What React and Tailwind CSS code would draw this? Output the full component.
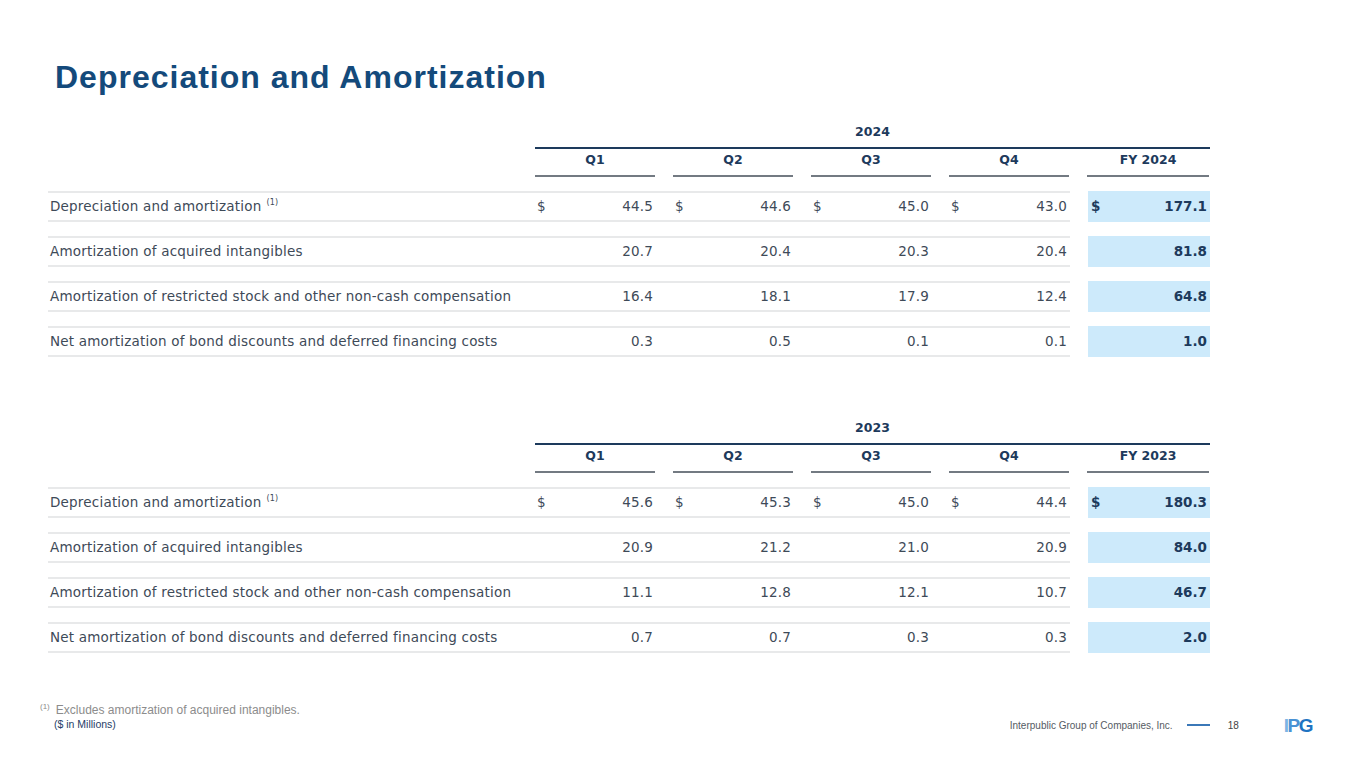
import React from 'react';

// Datos de las tablas
const tablas = [
  {
    anio: '2024',
    filas: [
      { label: 'Depreciation and amortization', nota: true, dolar: true, q: ['44.5', '44.6', '45.0', '43.0'], fy: '177.1' },
      { label: 'Amortization of acquired intangibles', q: ['20.7', '20.4', '20.3', '20.4'], fy: '81.8' },
      { label: 'Amortization of restricted stock and other non-cash compensation', q: ['16.4', '18.1', '17.9', '12.4'], fy: '64.8' },
      { label: 'Net amortization of bond discounts and deferred financing costs', q: ['0.3', '0.5', '0.1', '0.1'], fy: '1.0' },
    ],
  },
  {
    anio: '2023',
    filas: [
      { label: 'Depreciation and amortization', nota: true, dolar: true, q: ['45.6', '45.3', '45.0', '44.4'], fy: '180.3' },
      { label: 'Amortization of acquired intangibles', q: ['20.9', '21.2', '21.0', '20.9'], fy: '84.0' },
      { label: 'Amortization of restricted stock and other non-cash compensation', q: ['11.1', '12.8', '12.1', '10.7'], fy: '46.7' },
      { label: 'Net amortization of bond discounts and deferred financing costs', q: ['0.7', '0.7', '0.3', '0.3'], fy: '2.0' },
    ],
  },
];

const Tabla = ({ anio, filas }) => (
  <div className="ml-[48px] w-[1162px] font-['DejaVu_Sans',sans-serif]">
    {/* Año */}
    <div className="ml-[487px] border-b-2 border-[#1d3a5c] pb-[5px] pt-[1px] text-center text-[12.5px] font-bold text-[#1d3a5c]">
      {anio}
    </div>

    {/* Encabezados */}
    <div className="grid grid-cols-[469px_120px_120px_120px_120px_122px] gap-x-[18px]">
      <div />
      {['Q1', 'Q2', 'Q3', 'Q4', `FY ${anio}`].map((h) => (
        <div
          key={h}
          className="h-[28px] border-b-2 border-[#737a82] pt-[2px] text-center text-[12.5px] font-bold text-[#1d3a5c]"
        >
          {h}
        </div>
      ))}
    </div>

    {/* Filas */}
    <div className="mt-[14px] flex flex-col gap-[14px]">
      {filas.map((f) => (
        <div key={f.label} className="flex h-[31px]">
          <div className="grid w-[1022px] grid-cols-[469px_120px_120px_120px_120px] gap-x-[18px] border-y-2 border-[#e8e9ea] text-[13.5px] tracking-[0.2px] text-[#3e4a58]">
            <div className="flex items-center pl-[2px] whitespace-nowrap">
              {f.label}
              {f.nota && <span className="ml-[5px] -mt-[6px] text-[8px]">(1)</span>}
            </div>
            {f.q.map((v, i) => (
              <div key={i} className="flex items-center justify-between px-[2px]">
                <span>{f.dolar ? '$' : ''}</span>
                <span>{v}</span>
              </div>
            ))}
          </div>
          <div className="ml-[18px] flex w-[122px] items-center justify-between bg-[#cdeafb] px-[3px] text-[13.5px] font-bold text-[#1d3a5c]">
            <span>{f.dolar ? '$' : ''}</span>
            <span>{f.fy}</span>
          </div>
        </div>
      ))}
    </div>
  </div>
);

export default function App() {
  return (
    <div className="relative h-[768px] w-[1365px] overflow-hidden bg-white font-['Liberation_Sans',Arial,sans-serif]">
      <h1 className="pl-[55px] pt-[58px] text-[32px] font-bold leading-[38px] tracking-[1px] text-[#144a7b]">
        Depreciation and Amortization
      </h1>

      <div className="mt-[26px]">
        <Tabla {...tablas[0]} />
      </div>
      <div className="mt-[61px]">
        <Tabla {...tablas[1]} />
      </div>

      {/* Pie de página */}
      <div className="mt-[50px] flex items-end justify-between pr-[53px]">
        <div className="pl-[40px]">
          <div className="flex items-start text-[12px] leading-[14px] text-[#8c8c8c]">
            <span className="mr-[6px] text-[8px] leading-[8px]">(1)</span>
            <span>Excludes amortization of acquired intangibles.</span>
          </div>
          <div className="pl-[14px] text-[10.5px] leading-[15px] text-[#1f4068]">($ in Millions)</div>
        </div>
        <div className="flex translate-y-[3px] items-center">
          <span className="text-[10px] text-[#555b63]">Interpublic Group of Companies, Inc.</span>
          <span className="ml-[14px] h-[1.5px] w-[23px] bg-[#3b78b8]" />
          <span className="ml-[18px] text-[10px] text-[#444]">18</span>
          <span className="ml-[45px] text-[19px] font-bold leading-none tracking-[-1.5px]">
            <span className="text-[#7db4e3]">I</span>
            <span className="text-[#4a92d4]">P</span>
            <span className="text-[#1f74c2]">G</span>
          </span>
        </div>
      </div>
    </div>
  );
}
